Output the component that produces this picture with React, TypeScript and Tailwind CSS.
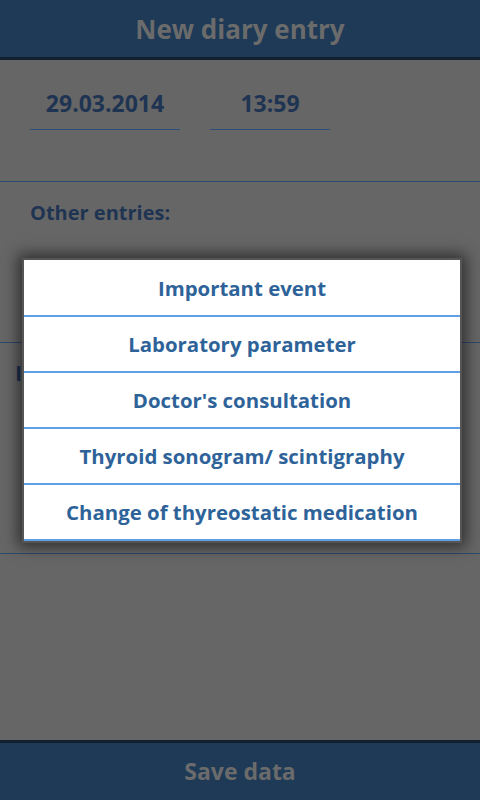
import React from 'react';

const options = [
  'Important event',
  'Laboratory parameter',
  "Doctor's consultation",
  'Thyroid sonogram/ scintigraphy',
  'Change of thyreostatic medication',
];

const App: React.FC = () => {
  return (
    <div className="relative w-[480px] h-[800px] overflow-hidden bg-[#666666] flex flex-col font-['Open_Sans',sans-serif]">
      <header className="h-[60px] shrink-0 bg-[#1e3a57] border-b-[3px] border-[#10202f] flex items-center justify-center">
        <h1 className="text-[26px] font-bold text-[#6b6b6b] leading-none">New diary entry</h1>
      </header>

      <main className="flex-1 flex flex-col">
        <div className="h-[122px] flex items-start gap-[30px] px-[30px] pt-[17px] border-b border-[#2c4a6e]">
          <div className="w-[150px] h-[53px] border-b border-[#2c4f7c] flex items-center justify-center">
            <span className="text-[23px] font-bold text-[#1e3452] leading-none">29.03.2014</span>
          </div>
          <div className="w-[120px] h-[53px] border-b border-[#2c4f7c] flex items-center justify-center">
            <span className="text-[23px] font-bold text-[#1e3452] leading-none">13:59</span>
          </div>
        </div>

        <div className="h-[161px] px-[30px] pt-[20px] border-b border-[#2c4a6e]">
          <span className="text-[20px] font-bold text-[#1e3452] leading-none">Other entries:</span>
        </div>

        <div className="h-[211px] px-[15px] pt-[18px] border-b border-[#2c4a6e]">
          <span className="text-[22px] font-bold text-[#1e3452] leading-none">Important events</span>
        </div>
      </main>

      <footer className="h-[60px] shrink-0 bg-[#1e3a57] border-t-[3px] border-[#10202f] flex items-center justify-center">
        <span className="text-[23px] font-bold text-[#6b6b6b] leading-none">Save data</span>
      </footer>

      <div className="absolute left-[22px] top-[258px] w-[440px] border-2 border-[#555555] bg-white shadow-[0_0_14px_4px_rgba(0,0,0,0.55)] pt-[1px]">
        {options.map((label) => (
          <button
            key={label}
            className="w-full h-[56px] flex items-center justify-center border-b-2 border-[#62a0e6] text-[20.4px] font-bold text-[#2e6399]"
          >
            {label}
          </button>
        ))}
      </div>
    </div>
  );
};

export default App;
